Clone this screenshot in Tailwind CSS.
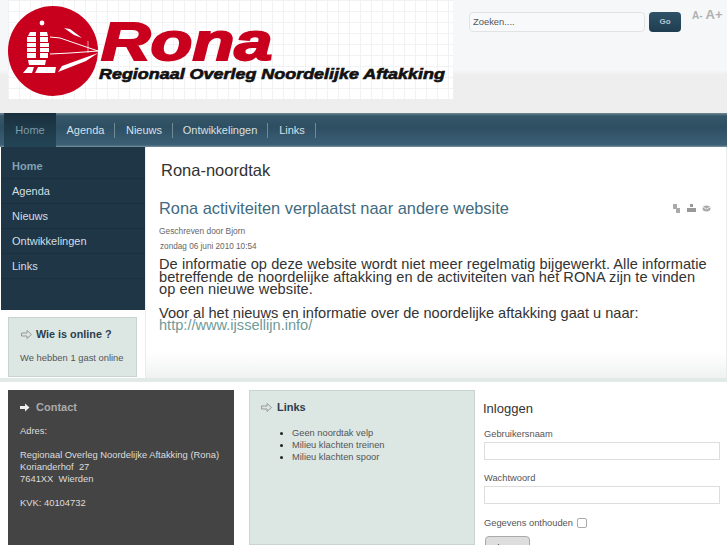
<!DOCTYPE html>
<html lang="nl">
<head>
  <meta charset="UTF-8">
  <title>Rona-noordtak</title>
  <script src="https://cdn.jsdelivr.net/npm/@tailwindcss/browser@4"></script>
</head>
<body class="w-[727px] h-[545px] overflow-hidden bg-white font-['Liberation_Sans',Arial,sans-serif] text-[#444]">

  <!-- Kop -->
  <header class="h-[113px] flex bg-[linear-gradient(#f6f7f9_0,#f6f7f9_70px,#eeeeee_75px)]">
    <div class="relative ml-2 w-[445px] h-[99px] bg-white bg-[linear-gradient(#f0f2f4_1px,transparent_1px),linear-gradient(90deg,#f0f2f4_1px,transparent_1px)] bg-[size:11px_11px] overflow-hidden">
      <svg class="absolute left-0 top-0" width="100" height="99" viewBox="8 0 100 99">
        <circle cx="53" cy="51" r="45" fill="#c8001e"/>
        <circle cx="42" cy="23" r="2.400" fill="#fff"/>
        <g fill="#fff">
          <path d="M30 32h6v4h-8zM27 37h9v5h-9zM27 43h9v4h-9zM27 48h9v4h-9zM27 53h9v5h-9z"/>
          <path d="M40 32h7l1 4h-8zM40 37h8v5h-8zM40 43h9v4h-9zM40 48h9v4h-9zM40 53h8v5h-8z"/>
          <path d="M28 60h18l-1 5h-16zM23 73l5-6h6l-2 6zM35 73l3-6h18l-1 6z"/>
          <path d="M64 28l6 1 12 9-8-3z"/>
          <path d="M58 72l4-6 36-13-12 8z"/>
        </g>
        <g fill="none" stroke="#fff" stroke-width="1">
          <path d="M50 37l10 1 38 13"/>
          <path d="M50 54l20-1 28-2"/>
          <path d="M88 41v12" stroke-width="0.600"/>
        </g>
      </svg>
      <span class="absolute left-[93px] top-[19px] text-[54px] leading-[44px] font-bold italic text-[#c8001e] origin-left scale-x-[1.27] [-webkit-text-stroke:2px_#c8001e]">Rona</span>
      <span class="absolute left-[91px] top-[66px] text-[14px] leading-4 font-bold italic text-[#111] origin-left scale-x-[1.28] whitespace-nowrap [-webkit-text-stroke:0.6px_#111]">Regionaal Overleg Noordelijke Aftakking</span>
    </div>
    <form class="ml-4 mt-3 flex items-start gap-1">
      <div class="w-[176px] h-5 border border-[#e2e4e4] rounded-sm bg-[#f8f9fa] pl-[3px] text-[9.400px] leading-[17px] text-[#555]">Zoeken....</div>
      <button type="button" class="w-8 h-[20px] rounded-sm bg-[linear-gradient(#2f5268,#1f3d50)] text-[8px] font-bold text-[#b9c8d0]">Go</button>
    </form>
    <div class="ml-[11px] mt-[8px] flex items-start gap-[3px] font-bold text-[#b0b0b0]">
      <span class="text-[10px] leading-[14px] mt-[1px]">A-</span>
      <span class="text-[13px] leading-[14px]">A+</span>
    </div>
  </header>

  <!-- Hoofdmenu -->
  <nav class="h-[34px] pl-1 flex bg-[linear-gradient(#728a96_0,#36566a_3px,#2e4e62_14px,#3d6076_32px,#7c97a3_34px)] text-[11px]">
    <a class="w-[52px] text-center leading-[34px] bg-[linear-gradient(#1a303e,#234556)] text-[#7d9baa]">Home</a>
    <div class="flex items-center text-[#d6e0e5]">
      <a class="w-[59px] h-[15px] pl-px leading-[15px] text-center border-r border-[#6f8995]">Agenda</a>
      <a class="w-[58px] h-[15px] pl-px leading-[15px] text-center border-r border-[#6f8995]">Nieuws</a>
      <a class="w-[95px] h-[15px] leading-[15px] text-center border-r border-[#6f8995]">Ontwikkelingen</a>
      <a class="w-[48px] h-[15px] pl-px leading-[15px] text-center border-r border-[#6f8995]">Links</a>
    </div>
  </nav>

  <!-- Midden -->
  <div class="h-[231px] flex">
    <aside class="w-[145px] pl-px shrink-0">
      <ul class="h-[163px] bg-[#1f3646] pt-[7px] text-[11px] text-[#d5dee2]">
        <li class="h-[25px] pl-[11px] leading-[25px] border-b border-[#1b2f3d] font-bold text-[#7fa3b5]">Home</li>
        <li class="h-[25px] pl-[11px] leading-[25px] border-b border-[#1b2f3d]">Agenda</li>
        <li class="h-[25px] pl-[11px] leading-[25px] border-b border-[#1b2f3d]">Nieuws</li>
        <li class="h-[25px] pl-[11px] leading-[25px] border-b border-[#1b2f3d]">Ontwikkelingen</li>
        <li class="h-[25px] pl-[11px] leading-[25px] border-b border-[#1b2f3d]">Links</li>
      </ul>
      <div class="ml-[7px] mt-[7px] w-[129px] h-[60px] bg-[#dce6e3] border border-[#c8d4d0] pl-3 pt-[8px]">
        <div class="flex items-center gap-[4px] text-[10.800px] leading-[16px] font-bold text-[#2c3e4c]">
          <svg width="11" height="9" viewBox="0 0 11 9"><path d="M0.500 3h5.500v-2.500l4.500 4-4.500 4v-2.500h-5.500z" fill="#dce6e3" stroke="#999"/></svg>
          Wie is online ?
        </div>
        <p class="-ml-px mt-[10px] text-[9.400px] leading-3 text-[#555]">We hebben 1 gast online</p>
      </div>
    </aside>
    <main class="flex-1 pl-[14px] pr-1 border-l border-r border-[#e8ecec] bg-[linear-gradient(#ffffff_0,#ffffff_205px,#f0f1f1_231px)]">
      <h1 class="ml-[1px] mt-[12px] text-[16.500px] leading-[22px] text-[#333]">Rona-noordtak</h1>
      <div class="mt-[16px] flex items-center justify-between pr-[11px]">
        <h2 class="-ml-[1px] text-[16.400px] leading-[22px] text-[#3f6a80]">Rona activiteiten verplaatst naar andere website</h2>
        <div class="flex gap-[6px]">
          <svg width="9" height="9" viewBox="0 0 9 9" fill="#aaa"><path d="M1 0h4v5h-4zM4 4h4v5h-4z"/></svg>
          <svg width="9" height="9" viewBox="0 0 9 9" fill="#999"><path d="M3 0h3v3h-3zM0 4h9v4h-9z"/></svg>
          <svg width="9" height="9" viewBox="0 0 9 9"><ellipse cx="4.500" cy="4.500" rx="4" ry="3" fill="#aaa"/><path d="M1 3l3.500 2 3.500-2" stroke="#eee" fill="none"/></svg>
        </div>
      </div>
      <p class="-ml-[1px] mt-[6px] text-[8.400px] leading-3 text-[#666]">Geschreven door Bjorn</p>
      <p class="mt-[4px] text-[8.200px] leading-3 text-[#666]">zondag 06 juni 2010 10:54</p>
      <p class="-ml-[1px] mt-[5px] text-[14.600px] tracking-[0.06px] leading-[12.500px] text-[#333] whitespace-nowrap">De informatie op deze website wordt niet meer regelmatig bijgewerkt. Alle informatie<br>betreffende de noordelijke aftakking en de activiteiten van het RONA zijn te vinden<br>op een nieuwe website.</p>
      <p class="-ml-[1px] mt-[11px] text-[14.600px] leading-[12.500px] text-[#333]">Voor al het nieuws en informatie over de noordelijke aftakking gaat u naar:<br><a class="text-[#6f9a98]">http://www.ijssellijn.info/</a></p>
    </main>
  </div>

  <div class="h-[4px] bg-[#e1eae7]"></div>

  <!-- Onderkant -->
  <div class="h-[163px] overflow-hidden flex pl-2 pt-2">
    <section class="w-[226px] h-[155px] bg-[#444] pl-3 pt-[9px] text-[9.400px] leading-3 text-[#ddd]">
      <h3 class="flex items-center gap-[6px] text-[11px] leading-4 font-bold text-[#aaa]">
        <svg width="10" height="9" viewBox="0 0 10 9"><path d="M0 3h5v-2.500l4.500 4-4.500 4v-2.500h-5z" fill="#eee"/></svg>
        Contact
      </h3>
      <p class="mt-[10px]">Adres:</p>
      <p class="mt-3">Regionaal Overleg Noordelijke Aftakking (Rona)<br>Korianderhof&nbsp; 27<br>7641XX&nbsp; Wierden</p>
      <p class="mt-3">KVK: 40104732</p>
    </section>
    <section class="ml-[15px] w-[226px] h-[155px] bg-[#dce6e3] border border-[#c8d4d0] pl-[11px] pt-[8px]">
      <h3 class="flex items-center gap-[5px] text-[11px] leading-4 font-bold text-[#2c3e4c]">
        <svg width="11" height="9" viewBox="0 0 11 9"><path d="M0.500 3h5.500v-2.500l4.500 4-4.500 4v-2.500h-5.500z" fill="#dce6e3" stroke="#999"/></svg>
        Links
      </h3>
      <ul class="mt-[12px] ml-[31px] list-disc text-[9.300px] leading-3 text-[#555] marker:text-[#222]">
        <li>Geen noordtak velp</li>
        <li>Milieu klachten treinen</li>
        <li>Milieu klachten spoor</li>
      </ul>
    </section>
    <form class="ml-[9px] w-[236px] pt-[11px] text-[9.300px] leading-3 text-[#555]">
      <h3 class="-ml-px text-[13px] leading-4 text-[#333]">Inloggen</h3>
      <label class="block mt-[11px]">Gebruikersnaam</label>
      <input type="text" class="block mt-[2px] w-[236px] h-[18px] bg-white border border-[#ddd]">
      <label class="block mt-[12px]">Wachtwoord</label>
      <input type="text" class="block mt-[2px] w-[236px] h-[18px] bg-white border border-[#ddd]">
      <div class="mt-[13px] flex items-center gap-1">
        <span>Gegevens onthouden</span>
        <span class="w-[10px] h-[10px] border border-[#aaa] rounded-[2px] bg-white"></span>
      </div>
      <button type="button" class="block mt-[7px] ml-px px-1 h-6 text-[9px] text-[#333] bg-[#ddd] border border-[#aaa] rounded-sm">Inloggen</button>
    </form>
  </div>
</body>
</html>
